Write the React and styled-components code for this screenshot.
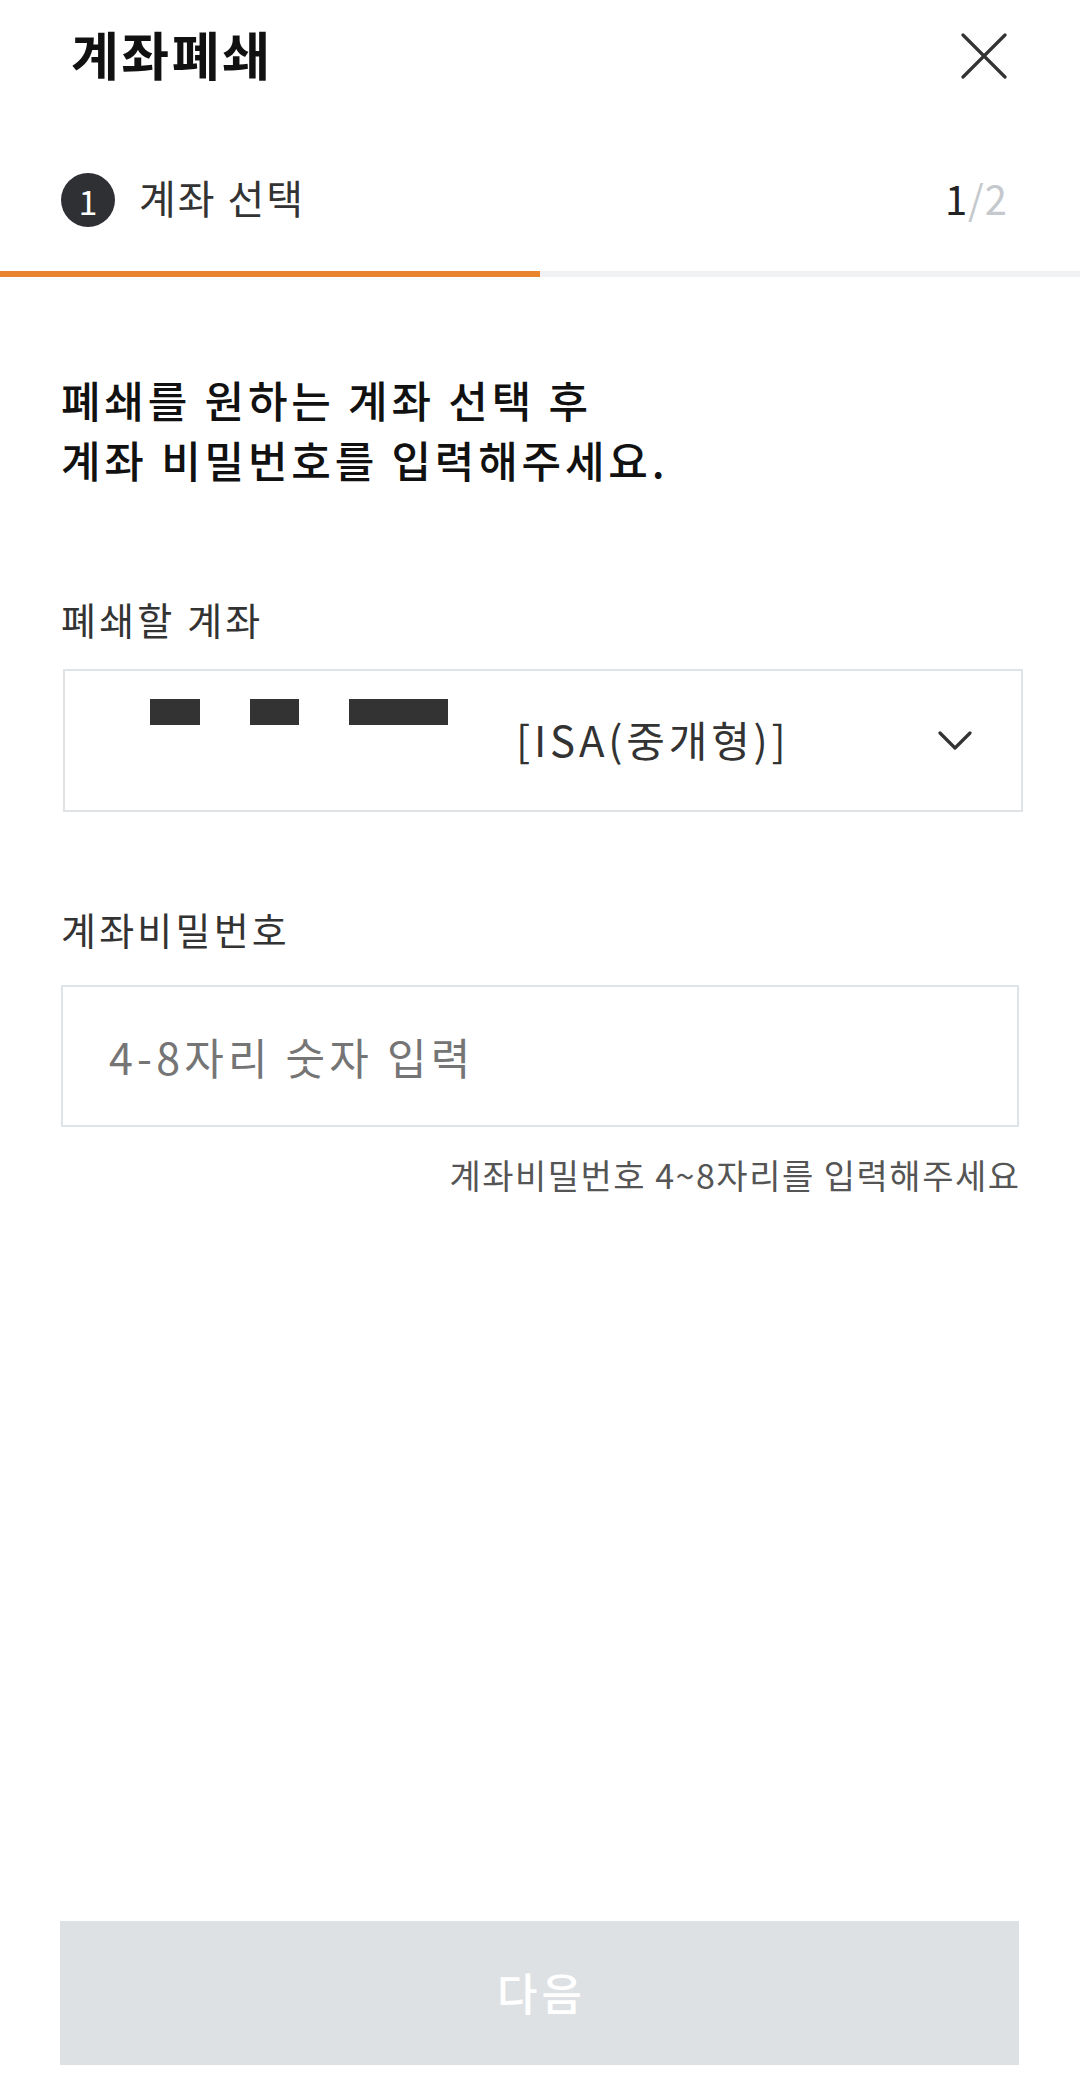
import React from 'react'
import styled, { createGlobalStyle } from 'styled-components';

const GlobalStyle = createGlobalStyle`
  html, body {
    margin: 0;
    padding: 0;
    background: #fff;
  }
  body {
    font-family: "Noto Sans CJK KR", "Noto Sans", sans-serif;
    color: #333;
  }
  * { box-sizing: border-box; }
`;

function CloseIcon() {
    return (
        <svg width="46" height="46" viewBox="0 0 46 46">
            <path d="M2 2 L44 44 M44 2 L2 44" stroke="#333" strokeWidth="3.2" strokeLinecap="round" fill="none" />
        </svg>
    )
}

function Chevron() {
    return (
        <svg width="34" height="20" viewBox="0 0 34 20">
            <polyline points="2,2 17,17 32,2" stroke="#333" strokeWidth="3.2" strokeLinecap="round" strokeLinejoin="round" fill="none" />
        </svg>
    )
}

function App() {
    return (
        <Page>
            <GlobalStyle />
            <Header>
                <Title>계좌폐쇄</Title>
                <CloseButton aria-label="닫기"><CloseIcon /></CloseButton>
            </Header>

            <StepRow>
                <StepInfo>
                    <StepBadge>1</StepBadge>
                    <StepName>계좌 선택</StepName>
                </StepInfo>
                <StepCount>1<span>/2</span></StepCount>
            </StepRow>

            <Progress>
                <ProgressFill style={{ width: `${(1 / 2) * 100}%` }} />
            </Progress>

            <Body>
                <Heading>
                    폐쇄를 원하는 계좌 선택 후<br />
                    계좌 비밀번호를 입력해주세요.
                </Heading>

                <FieldLabel top={105}>폐쇄할 계좌</FieldLabel>
                <SelectBox>
                    <AccountMasks>
                        <Mask w={50} />
                        <Mask w={49} />
                        <Mask w={99} />
                    </AccountMasks>
                    <AccountType>[ISA(중개형)]</AccountType>
                    <Chevron />
                </SelectBox>

                <FieldLabel top={92}>계좌비밀번호</FieldLabel>
                <PasswordInput type="password" placeholder="4-8자리 숫자 입력" />
                <Helper>계좌비밀번호 4~8자리를 입력해주세요</Helper>
            </Body>

            <NextButton disabled>다음</NextButton>
        </Page>
    )
}

export default App

const Page = styled.div`
min-height: 2077px;
display: flex;
flex-direction: column;
`;

const Header = styled.div`
height: 112px;
display: flex;
align-items: center;
justify-content: space-between;
padding: 0 73px 0 71px;
`;

const Title = styled.h1`
margin: 0 0 5px;
font-size: 52px;
font-weight: 700;
color: #111;
line-height: 1;
letter-spacing: 2.5px;
`;

const CloseButton = styled.button`
border: none;
background: none;
padding: 0;
width: 46px;
height: 46px;
display: flex;
`;

const StepRow = styled.div`
margin-top: 60px;
height: 56px;
display: flex;
align-items: center;
justify-content: space-between;
padding: 0 73px 0 61px;
`;

const StepInfo = styled.div`
display: flex;
align-items: center;
gap: 24px;
`;

const StepBadge = styled.div`
width: 54px;
height: 54px;
border-radius: 50%;
background: #2e3033;
color: #fff;
font-size: 34px;
font-weight: 400;
display: flex;
align-items: center;
justify-content: center;
`;

const StepName = styled.div`
font-size: 40px;
color: #333;
letter-spacing: 2px;
margin-bottom: 6px;
`;

const StepCount = styled.div`
font-size: 40px;
color: #222;
letter-spacing: 1px;
margin: 0 -1px 4px 0;
span{
    color: #c5c9cd;
}
`;

const Progress = styled.div`
margin-top: 43px;
height: 6px;
background: #f0f1f3;
`;

const ProgressFill = styled.div`
height: 100%;
background: #e9832d;
`;

const Body = styled.div`
padding: 0 61px;
display: flex;
flex-direction: column;
`;

const Heading = styled.h2`
margin: 92px 0 0;
font-size: 43px;
line-height: 60px;
font-weight: 500;
color: #111;
letter-spacing: 3.8px;
`;

const FieldLabel = styled.div`
margin-top: ${p => p.top}px;
font-size: 38px;
line-height: 50px;
color: #333;
letter-spacing: 3.2px;
`;

const SelectBox = styled.div`
margin: 25px -4px 0 2px;
height: 143px;
border: 2px solid #e0e3e5;
display: flex;
align-items: center;
padding: 0 49px 0 85px;
`;

const AccountMasks = styled.div`
align-self: flex-start;
margin-top: 28px;
display: flex;
gap: 50px;
`;

const Mask = styled.span`
display: block;
width: ${p => p.w}px;
height: 26px;
background: #333;
`;

const AccountType = styled.div`
margin: 0 0 5px 68px;
flex-grow: 1;
font-size: 42px;
color: #333;
letter-spacing: 3.8px;
`;

const PasswordInput = styled.input`
margin-top: 31px;
height: 142px;
border: 2px solid #e0e3e5;
padding: 0 46px;
font-family: "Noto Sans CJK KR", "Noto Sans", sans-serif;
font-size: 43px;
color: #333;
outline: none;
letter-spacing: 4.2px;
::placeholder{
    color: #9a9a9a;
}
`;

const Helper = styled.div`
margin-top: 26px;
margin-right: -1.5px;
text-align: right;
font-size: 34px;
line-height: 44px;
color: #555;
letter-spacing: 1.5px;
`;

const NextButton = styled.button`
margin: auto 61px 12px 60px;
height: 144px;
border: none;
background: #dee1e4;
color: #fff;
font-family: "Noto Sans CJK KR", "Noto Sans", sans-serif;
font-size: 44px;
font-weight: 500;
letter-spacing: 4px;
text-indent: 4px;
padding-bottom: 4px;
`;
